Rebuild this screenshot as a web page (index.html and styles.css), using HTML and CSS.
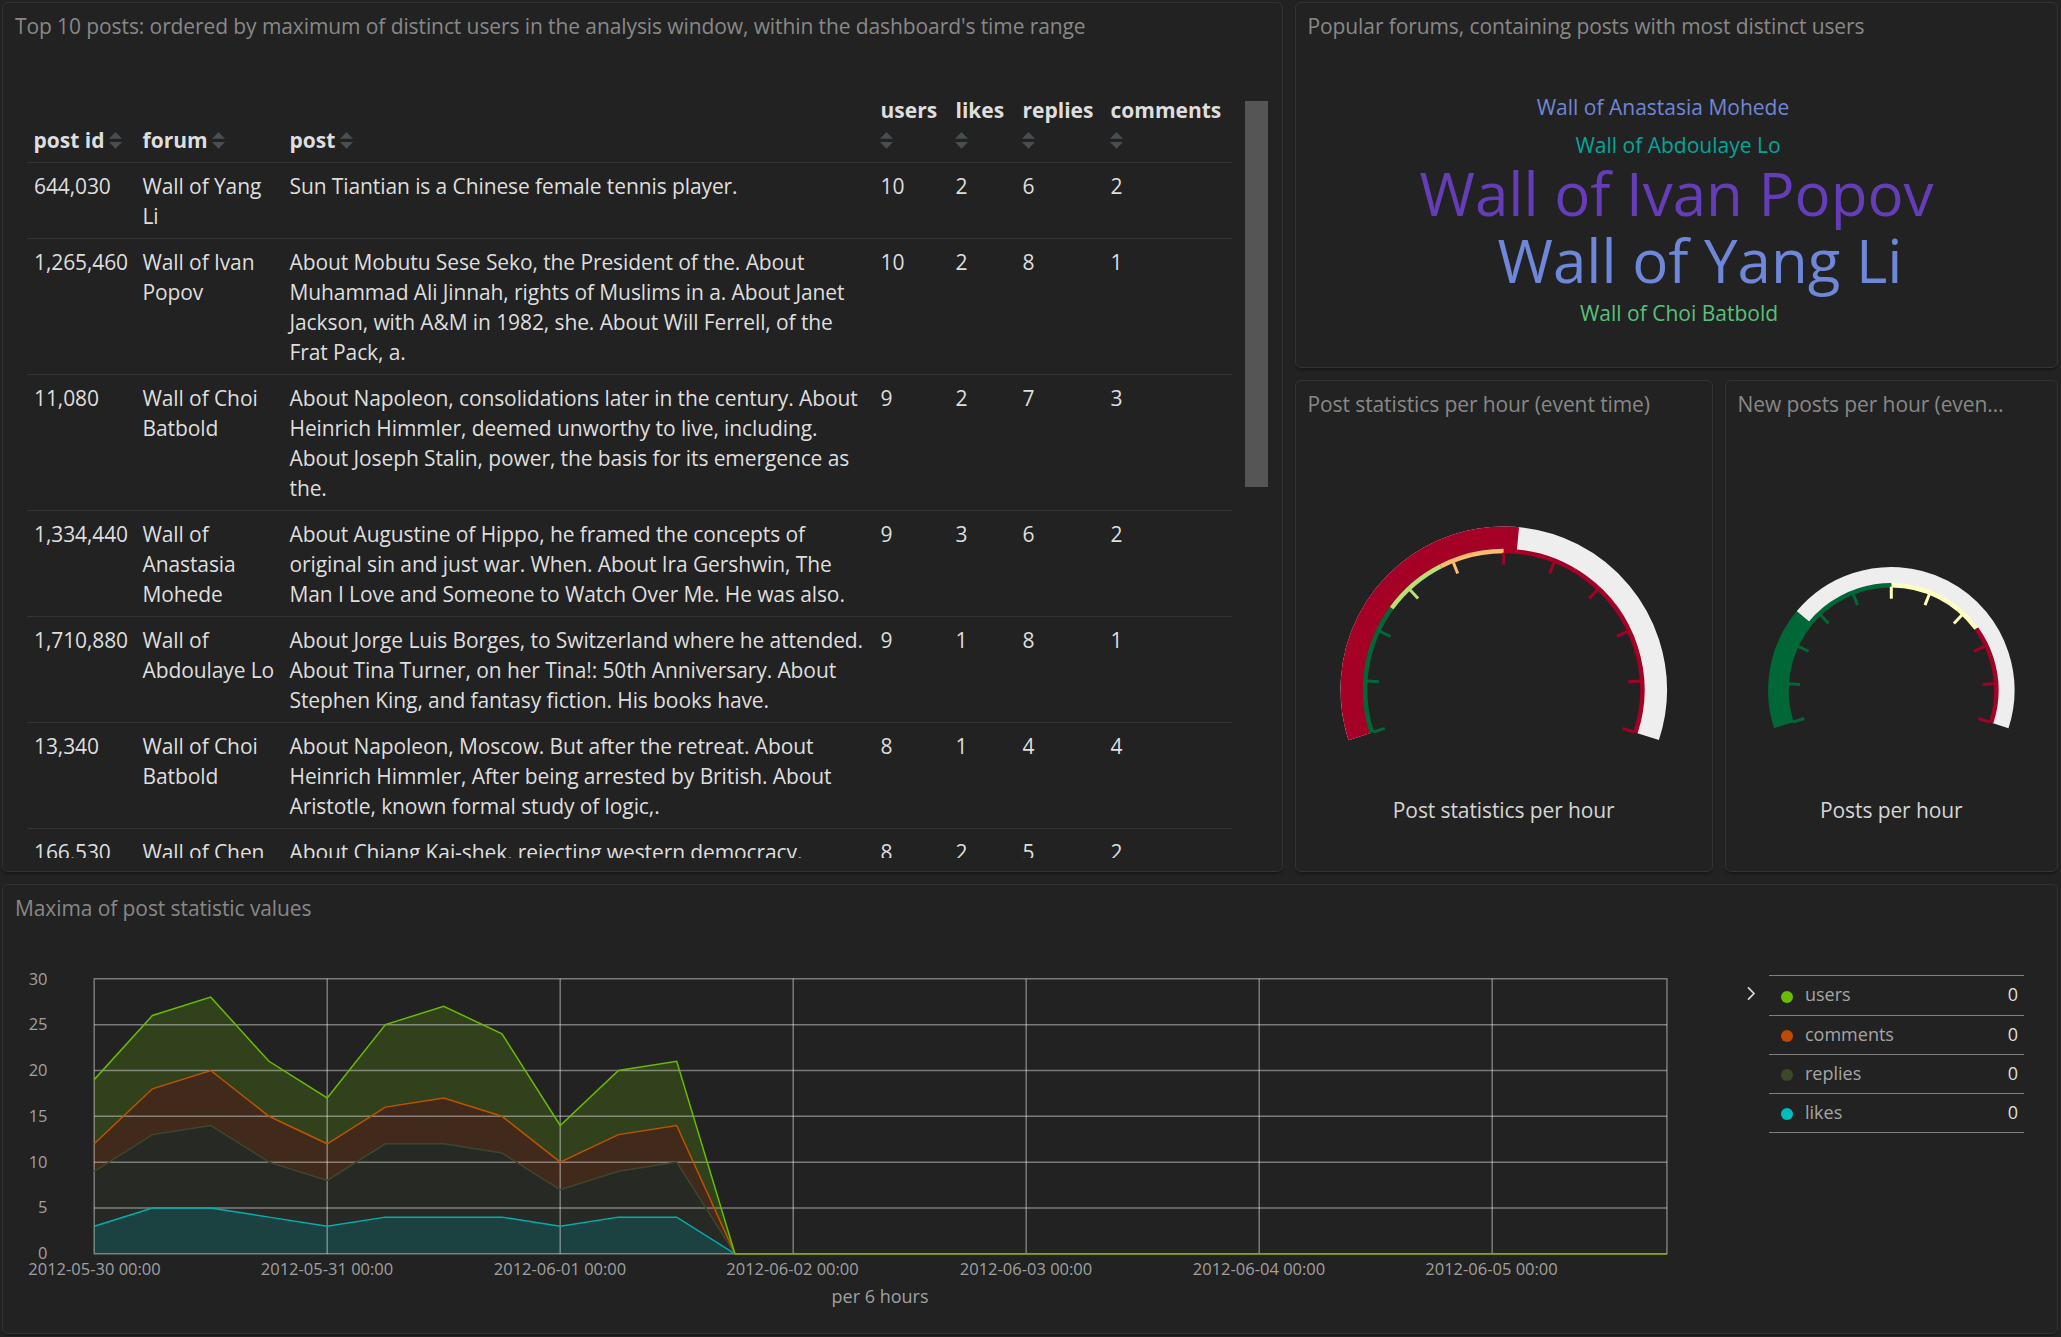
FILE: index.html
```html
<!DOCTYPE html>
<html lang="en">
<head>
<meta charset="utf-8">
<title>Post statistics dashboard</title>
<link rel="stylesheet" href="styles.css">
</head>
<body>
<svg class="defs" width="0" height="0">
  <symbol id="sort" viewBox="0 0 13 17"><path d="M0 6.7 6.5 0 13 6.7zM0 10h13L6.500 16.700z"/></symbol>
</svg>
<main class="dashboard">
  <section class="panel panel-table">
    <h2 class="panel-title">Top 10 posts: ordered by maximum of distinct users in the analysis window, within the dashboard's time range</h2>
    <div class="table-area">
      <div class="table-scroll">
        <table class="posts">
          <colgroup><col class="c-id"><col class="c-forum"><col class="c-post"><col class="c-users"><col class="c-likes"><col class="c-replies"><col class="c-comments"></colgroup>
          <thead>
            <tr>
              <th>post id <svg class="sort"><use href="#sort"/></svg></th>
              <th>forum <svg class="sort"><use href="#sort"/></svg></th>
              <th>post <svg class="sort"><use href="#sort"/></svg></th>
              <th>users <svg class="sort"><use href="#sort"/></svg></th>
              <th>likes <svg class="sort"><use href="#sort"/></svg></th>
              <th>replies <svg class="sort"><use href="#sort"/></svg></th>
              <th>comments <svg class="sort"><use href="#sort"/></svg></th>
            </tr>
          </thead>
          <tbody>
            <tr><td>644,030</td><td>Wall of Yang Li</td><td>Sun Tiantian is a Chinese female tennis player.</td><td>10</td><td>2</td><td>6</td><td>2</td></tr>
            <tr><td>1,265,460</td><td>Wall of Ivan Popov</td><td>About Mobutu Sese Seko, the President of the. About Muhammad Ali Jinnah, rights of Muslims in a. About Janet Jackson, with A&amp;M in 1982, she. About Will Ferrell, of the Frat Pack, a.</td><td>10</td><td>2</td><td>8</td><td>1</td></tr>
            <tr><td>11,080</td><td>Wall of Choi Batbold</td><td>About Napoleon, consolidations later in the century. About Heinrich Himmler, deemed unworthy to live, including. About Joseph Stalin, power, the basis for its emergence as the.</td><td>9</td><td>2</td><td>7</td><td>3</td></tr>
            <tr><td>1,334,440</td><td>Wall of Anastasia Mohede</td><td>About Augustine of Hippo, he framed the concepts of original sin and just war. When. About Ira Gershwin, The Man I Love and Someone to Watch Over Me. He was also.</td><td>9</td><td>3</td><td>6</td><td>2</td></tr>
            <tr><td>1,710,880</td><td>Wall of Abdoulaye Lo</td><td>About Jorge Luis Borges, to Switzerland where he attended. About Tina Turner, on her Tina!: 50th Anniversary. About Stephen King, and fantasy fiction. His books have.</td><td>9</td><td>1</td><td>8</td><td>1</td></tr>
            <tr><td>13,340</td><td>Wall of Choi Batbold</td><td>About Napoleon, Moscow. But after the retreat. About Heinrich Himmler, After being arrested by British. About Aristotle, known formal study of logic,.</td><td>8</td><td>1</td><td>4</td><td>4</td></tr>
            <tr><td>166,530</td><td>Wall of Chen</td><td>About Chiang Kai-shek, rejecting western democracy.</td><td>8</td><td>2</td><td>5</td><td>2</td></tr>
          </tbody>
        </table>
      </div>
      <div class="scroll-thumb"></div>
    </div>
  </section>

  <section class="panel panel-cloud">
    <h2 class="panel-title">Popular forums, containing posts with most distinct users</h2>
    <svg class="cloud" width="761" height="319">
      <text class="tag blue" x="367" y="67">Wall of Anastasia Mohede</text>
      <text class="tag teal" x="382" y="105">Wall of Abdoulaye Lo</text>
      <text class="tag big purple" x="380.500" y="168">Wall of Ivan Popov</text>
      <text class="tag big blue" x="404" y="235">Wall of Yang Li</text>
      <text class="tag green" x="383" y="273">Wall of Choi Batbold</text>
    </svg>
  </section>

  <section class="panel">
    <h2 class="panel-title">Post statistics per hour (event time)</h2>
    <svg class="gauge" width="416" height="445">
      <g transform="translate(207.7 263.7)">
        <g class="ring" transform="rotate(162)">
          <circle r="151.500" pathLength="360" stroke="#eee" stroke-width="23.400" stroke-dasharray="216 360"/>
          <circle r="151.500" pathLength="360" stroke="#a50026" stroke-width="23.400" stroke-dasharray="113.400 360"/>
          <circle r="138.600" pathLength="360" stroke="#a50026" stroke-width="4.500" stroke-dasharray="108 108 0 360" stroke-dashoffset="108"/>
          <circle r="138.600" pathLength="360" stroke="#a50026" stroke-width="4.500" stroke-dasharray="0 108 108 360"/>
          <circle r="138.600" pathLength="360" stroke="#fdbf6f" stroke-width="4.500" stroke-dasharray="0 81 27 360"/>
          <circle r="138.600" pathLength="360" stroke="#b7e075" stroke-width="4.500" stroke-dasharray="0 54 27 360"/>
          <circle r="138.600" pathLength="360" stroke="#006837" stroke-width="4.500" stroke-dasharray="54 360"/>
          <g stroke="#006837"><path d="M137 0H125"/><path d="M137 0H125" transform="rotate(21.6)"/><path d="M137 0H125" transform="rotate(43.2)"/></g>
          <path d="M137 0H125" stroke="#b7e075" transform="rotate(64.8)"/>
          <path d="M137 0H125" stroke="#fdbf6f" transform="rotate(86.4)"/>
          <g stroke="#a50026"><path d="M137 0H125" transform="rotate(108)"/><path d="M137 0H125" transform="rotate(129.6)"/><path d="M137 0H125" transform="rotate(151.2)"/><path d="M137 0H125" transform="rotate(172.8)"/><path d="M137 0H125" transform="rotate(194.4)"/><path d="M137 0H125" transform="rotate(216)"/></g>
        </g>
      </g>
      <text class="gauge-label" x="207.700" y="392">Post statistics per hour</text>
    </svg>
  </section>

  <section class="panel">
    <h2 class="panel-title">New posts per hour (event time)</h2>
    <svg class="gauge" width="331" height="445">
      <g transform="translate(165.3 264.2)">
        <g class="ring" transform="rotate(162)">
          <circle r="114.700" pathLength="360" stroke="#eee" stroke-width="17" stroke-dasharray="0 57.800 158.200 360"/>
          <circle r="113" pathLength="360" stroke="#006837" stroke-width="20.400" stroke-dasharray="57.800 360"/>
          <circle r="105" pathLength="360" stroke="#a50026" stroke-width="4.500" stroke-dasharray="0 162 54 360"/>
          <circle r="105" pathLength="360" stroke="#feffbe" stroke-width="4.500" stroke-dasharray="0 108 54 360"/>
          <circle r="105" pathLength="360" stroke="#006837" stroke-width="4.500" stroke-dasharray="108 360"/>
          <g stroke="#006837"><path d="M103.500 0H91.500"/><path d="M103.500 0H91.500" transform="rotate(21.6)"/><path d="M103.500 0H91.500" transform="rotate(43.2)"/><path d="M103.500 0H91.500" transform="rotate(64.8)"/><path d="M103.500 0H91.500" transform="rotate(86.4)"/></g>
          <g stroke="#feffbe"><path d="M103.500 0H91.500" transform="rotate(108)"/><path d="M103.500 0H91.500" transform="rotate(129.6)"/><path d="M103.500 0H91.500" transform="rotate(151.2)"/></g>
          <g stroke="#a50026"><path d="M103.500 0H91.500" transform="rotate(172.8)"/><path d="M103.500 0H91.500" transform="rotate(194.4)"/><path d="M103.500 0H91.500" transform="rotate(216)"/></g>
        </g>
      </g>
      <text class="gauge-label" x="165.300" y="392">Posts per hour</text>
    </svg>
  </section>

  <section class="panel panel-chart">
    <h2 class="panel-title">Maxima of post statistic values</h2>
    <div class="chart-area">
      <svg class="chart" width="1735" height="403">
        <!-- x: one unit per 6 hours, y: one unit per count -->
        <g transform="translate(91.2 323.8) scale(58.25 -9.167)">
          <path class="area a-users" d="M0 12V19L1 26 2 28 3 21 4 17 5 25 6 27 7 24 8 14 9 20 10 21 11 0 10 14 9 13 8 10 7 15 6 17 5 16 4 12 3 15 2 20 1 18z"/>
          <path class="area a-comments" d="M0 9V12L1 18 2 20 3 15 4 12 5 16 6 17 7 15 8 10 9 13 10 14 11 0 10 10 9 9 8 7 7 11 6 12 5 12 4 8 3 10 2 14 1 13z"/>
          <path class="area a-replies" d="M0 3V9L1 13 2 14 3 10 4 8 5 12 6 12 7 11 8 7 9 9 10 10 11 0 10 4 9 4 8 3 7 4 6 4 5 4 4 3 3 4 2 5 1 5z"/>
          <path class="area a-likes" d="M0 0V3L1 5 2 5 3 4 4 3 5 4 6 4 7 4 8 3 9 4 10 4 11 0z"/>
          <path class="grid" d="M0 5H27"/><path class="grid" d="M0 10H27"/><path class="grid" d="M0 15H27"/><path class="grid" d="M0 20H27"/><path class="grid" d="M0 25H27"/><path class="grid" d="M0 0H27V30H0z"/>
          <path class="grid" d="M4 0V30"/><path class="grid" d="M8 0V30"/><path class="grid" d="M12 0V30"/><path class="grid" d="M16 0V30"/><path class="grid" d="M20 0V30"/><path class="grid" d="M24 0V30"/>
          <path class="line l-likes" d="M0 3 1 5 2 5 3 4 4 3 5 4 6 4 7 4 8 3 9 4 10 4 11 0H27"/>
          <path class="line l-replies" d="M0 9 1 13 2 14 3 10 4 8 5 12 6 12 7 11 8 7 9 9 10 10 11 0H27"/>
          <path class="line l-comments" d="M0 12 1 18 2 20 3 15 4 12 5 16 6 17 7 15 8 10 9 13 10 14 11 0H27"/>
          <path class="line l-users" d="M0 19 1 26 2 28 3 21 4 17 5 25 6 27 7 24 8 14 9 20 10 21 11 0H27"/>
        </g>
        <g class="tick-y">
          <text x="44.500" y="54.500">30</text><text x="44.500" y="100">25</text><text x="44.500" y="146">20</text><text x="44.500" y="191.500">15</text><text x="44.500" y="237.500">10</text><text x="44.500" y="283">5</text><text x="44.500" y="329">0</text>
        </g>
        <g class="tick-x">
          <text x="91.500" y="345">2012-05-30 00:00</text><text x="324" y="345">2012-05-31 00:00</text><text x="557" y="345">2012-06-01 00:00</text><text x="789.500" y="345">2012-06-02 00:00</text><text x="1023" y="345">2012-06-03 00:00</text><text x="1256" y="345">2012-06-04 00:00</text><text x="1488.500" y="345">2012-06-05 00:00</text>
        </g>
        <text class="axis-title" x="877" y="372.500">per 6 hours</text>
      </svg>
      <svg class="toggle" width="31" height="76"><path d="M10 57.300 16 63.500 10 69.700"/></svg>
      <ul class="legend">
        <li><i class="dot d-users"></i><span class="name">users</span><span class="value">0</span></li>
        <li><i class="dot d-comments"></i><span class="name">comments</span><span class="value">0</span></li>
        <li><i class="dot d-replies"></i><span class="name">replies</span><span class="value">0</span></li>
        <li><i class="dot d-likes"></i><span class="name">likes</span><span class="value">0</span></li>
      </ul>
    </div>
  </section>
</main>
</body>
</html>
```
FILE: styles.css
```css
* { box-sizing: border-box; }
body {
  margin: 0;
  background: #222;
  color: #dedede;
  font-family: "Open Sans", "Noto Sans", sans-serif;
  font-size: 21px;
  line-height: 30px;
  overflow: hidden;
}
.defs { position: absolute; }
.dashboard {
  display: grid;
  grid-template-columns: 1281px 418px 333px;
  grid-template-rows: 366px 492px 450px;
  gap: 12px;
  padding: 2px;
}
.panel {
  border: 1px solid #333;
  border-radius: 6px;
  background: #222;
  box-shadow: 0 3px 3px -1px rgba(0, 0, 0, .35);
  overflow: hidden;
  min-width: 0;
}
.panel-table { grid-row: span 2; }
.panel-cloud { grid-column: span 2; }
.panel-chart { grid-column: span 3; }
.panel-title {
  height: 45px;
  margin: 0;
  padding: 0 50px 0 11.500px;
  font-size: 21px;
  font-weight: 400;
  letter-spacing: -.095px;
  line-height: 47px;
  color: #888;
  white-space: nowrap;
  overflow: hidden;
  text-overflow: ellipsis;
}
.panel-table .panel-title, .panel-chart .panel-title { padding-left: 12px; }

.table-area { display: flex; align-items: flex-start; padding: 39px 0 0 24px; }
.table-scroll { width: 1205px; height: 771px; overflow: hidden; }
.scroll-thumb { width: 23px; height: 386px; margin: 14px 0 0 13px; background: #555; }
.posts { width: 1205px; table-layout: fixed; border-collapse: separate; border-spacing: 0; }
.c-id { width: 109px; }
.c-forum { width: 147px; }
.c-post { width: 591px; }
.c-users { width: 75px; }
.c-likes { width: 67px; }
.c-replies { width: 88px; }
.posts th, .posts td {
  padding: 7.5px 6.500px;
  border-bottom: 1px solid #343434;
  text-align: left;
  vertical-align: top;
}
.posts td { letter-spacing: -.1px; }
.posts td:first-child { padding-left: 7px; }
.posts th { vertical-align: bottom; font-weight: 700; }
.sort { display: inline-block; width: 13px; height: 17px; margin-left: -1px; fill: #494e50; vertical-align: -1px; }

svg { display: block; }
.tag { font-size: 21px; text-anchor: middle; }
.big { font-size: 60px; }
.blue { fill: #6f87d8; }
.teal { fill: #00a69b; }
.purple { fill: #663db8; }
.green { fill: #57c17b; }

.ring { fill: none; stroke-width: 3; }
.gauge-label { fill: #d5d5d5; text-anchor: middle; letter-spacing: -.1px; }

.chart-area { display: flex; align-items: flex-start; }
.area { fill-opacity: .2; }
.a-users { fill: #68bc00; }
.a-comments { fill: #be4b00; }
.a-replies { fill: #3c482c; }
.a-likes { fill: #00bcbc; }
.line { fill: none; stroke-width: 1.5; vector-effect: non-scaling-stroke; }
.l-users { stroke: #68bc00; }
.l-comments { stroke: #be5400; }
.l-replies { stroke: #3c482c; }
.l-likes { stroke: #00b0b0; }
.grid { fill: none; stroke: #fff; stroke-opacity: .4; stroke-width: 1.5; vector-effect: non-scaling-stroke; }
.tick-y, .tick-x { font-size: 16.500px; fill: #a0a0a0; }
.tick-y { text-anchor: end; }
.tick-x { text-anchor: middle; }
.axis-title { font-size: 18px; fill: #a0a0a0; text-anchor: middle; }
.toggle path { fill: none; stroke: #d8d8d8; stroke-width: 1.700; }
.legend {
  width: 255px;
  margin: 45px 0 0;
  padding: 0;
  list-style: none;
  border-top: 1px solid #808080;
  font-size: 18px;
}
.legend li {
  display: flex;
  align-items: center;
  height: 39px;
  padding: 0 6px 3px 12px;
  border-bottom: 1px solid #808080;
}
.legend li:first-child { height: 40px; }
.dot { width: 12px; height: 12px; border-radius: 50%; margin: 5px 12px 0 0; }
.name { flex: 1; color: #a5a5a5; }
.value { color: #dedede; }
.d-users { background: #68bc00; }
.d-comments { background: #be4b00; }
.d-replies { background: #3c482c; }
.d-likes { background: #00bcbc; }
```
